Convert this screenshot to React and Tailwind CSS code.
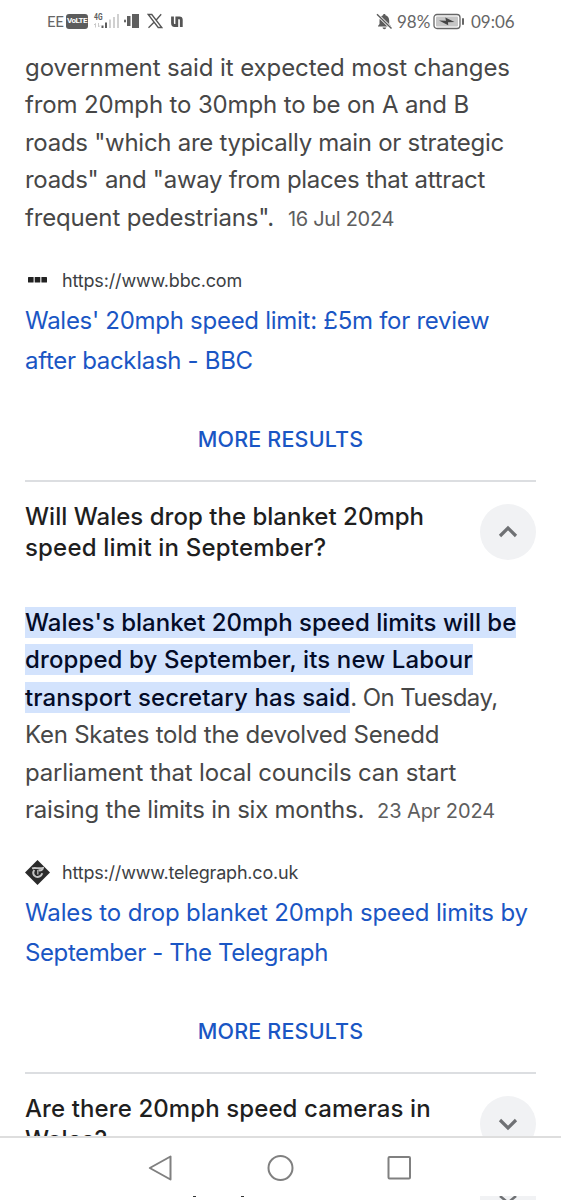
import { ChevronDown, ChevronUp } from "lucide-react";

function Line({ children, className = "" }) {
  return <span className={`block w-max whitespace-pre ${className}`}>{children}</span>;
}

function StatusBar() {
  return (
    <header className="flex h-[42px] shrink-0 items-center pl-[47px] pr-[47px] font-['Lato',sans-serif] text-[17px] leading-none text-[#666]">
      <span className="w-[19px] text-[15px] tracking-[-0.5px]">EE</span>
      <span className="flex h-[15px] w-[22px] shrink-0 items-center justify-center rounded-[3px] bg-[#5c5c5c] font-['Roboto',sans-serif] text-[8px] font-bold tracking-[-0.5px] text-white">
        VoLTE
      </span>
      <svg className="ml-[5px] shrink-0" width="27" height="18" viewBox="0 0 27 18">
        <text x="1" y="7.500" fontSize="8.500" fontWeight="700" fontFamily="Roboto" textLength="8.500" lengthAdjust="spacingAndGlyphs" fill="#5c5c5c">4G</text>
        <path d="M2.500 15.500v-4M1 13l1.500-1.500M5.500 11v4M7 13.500l-1.500 1.500" stroke="#c9c9c9" fill="none" />
        <path d="M9.500 13.500v2.500M13 10.500v5.500" stroke="#5c5c5c" strokeWidth="2" />
        <path d="M17 7.500v8.500M21 5v11M25 2v14" stroke="#d0d0d0" strokeWidth="2" />
      </svg>
      <svg className="ml-[4px] shrink-0" width="16" height="16" viewBox="0 0 16 16" fill="#5f5f5f">
        <rect x="0" y="6.500" width="2" height="3" rx="1" />
        <rect x="3" y="3" width="3.500" height="10" />
        <rect x="8" y="1" width="7" height="14" />
      </svg>
      <svg className="ml-[7px] shrink-0" width="16" height="16" viewBox="0 0 16 16" fill="none" stroke="#555" strokeWidth="1.300">
        <path d="M1.200 1.500h3.600l10 13h-3.600zM14.200 1.200 9 7.200M7 9.200 1.500 14.800" />
      </svg>
      <svg className="ml-[8px] shrink-0" width="12" height="13" viewBox="0 0 12 13" fill="none" stroke="#555" strokeWidth="2.800">
        <path d="M1.500 1.500v6.500q0 2.500 2 2.500h2.300V1.500M5.500 2.800h2.900q1.900 0 1.900 2v7.200" />
      </svg>
      <span className="grow" />
      <svg className="shrink-0" width="17" height="17" viewBox="0 0 17 17" fill="#5c5c5c">
        <path d="M8.300 1c.8 0 1.200.5 1.200 1.200 2.500.8 3.700 2.600 3.700 5.200v3.600l1.800 2v.6H2v-.6l1.500-2V7.400c0-2.600 1.300-4.400 3.600-5.200C7.100 1.500 7.500 1 8.300 1zM6.500 14.500h3.800c-.3 1.200-1 1.700-1.900 1.700s-1.600-.5-1.900-1.700z" />
        <path d="M1 1.200 15.500 15.500" stroke="#fff" strokeWidth="3" />
        <path d="M1 1.200 15.500 15.500" stroke="#5c5c5c" strokeWidth="1.400" />
      </svg>
      <span className="ml-[4px] w-[36px]">98%</span>
      <svg className="shrink-0" width="32" height="17" viewBox="0 0 32 17">
        <rect x="1" y="1.500" width="26" height="14" rx="3" fill="#fff" stroke="#666" strokeWidth="1.300" />
        <rect x="3" y="3.500" width="22" height="10" rx="1" fill="#c6c6c6" />
        <path d="m6 7.500 7 .3-.7-3.300L21.500 9l-6.500.2.200 3z" fill="#444" />
        <rect x="29" y="5" width="2" height="7" rx="1" fill="#666" />
      </svg>
      <span className="ml-[6px] w-[43px]">09:06</span>
    </header>
  );
}

function Source({ icon, children }) {
  return (
    <div className="flex h-6 items-center text-[18px] text-[#3c4043]">
      <span className="flex w-[37px] shrink-0">{icon}</span>
      {children}
    </div>
  );
}

function MoreResults() {
  return (
    <div className="flex h-10 items-center justify-center text-[21.500px] font-medium tracking-[0.18px] text-[#1a56c4]">
      <span>MORE RESULTS</span>
    </div>
  );
}

function Toggle({ open }) {
  const Icon = open ? ChevronUp : ChevronDown;
  return (
    <span className="mt-[3px] flex size-14 shrink-0 items-center justify-center rounded-full bg-[#f1f2f4] text-[#6f7174]">
      <Icon size={32} strokeWidth={2.4} strokeLinecap="butt" strokeLinejoin="miter" />
    </span>
  );
}

function BbcIcon() {
  return (
    <svg className="ml-[3px]" width="20" height="8" viewBox="0 0 20 8" fill="#222">
      <rect x="0" y="1" width="5.600" height="5.600" rx=".5" />
      <rect x="6.700" y="1" width="5.600" height="5.600" rx=".5" />
      <rect x="13.400" y="1" width="5.600" height="5.600" rx=".5" />
    </svg>
  );
}

function TelegraphIcon() {
  return (
    <svg width="25" height="25" viewBox="0 0 25 25">
      <path d="M12.500 0 25 12.500 12.500 25 0 12.500z" fill="#2b2b2b" />
      <path d="M7 8.300c3.500-1.200 6 .8 11-.3-.3 2.300-2.300 2.800-4.500 2.400" fill="none" stroke="#c4c4c4" strokeWidth="1.900" />
      <path d="M9.300 10c-1.800 2.300-1.300 5.600 1.500 6.600 2.800.9 5.600-.5 6.500-3.300" fill="none" stroke="#c4c4c4" strokeWidth="2" />
      <path d="M12.800 10v4.500" stroke="#a8a8a8" strokeWidth="1.500" />
    </svg>
  );
}

export default function App() {
  return (
    <div className="flex h-[1200px] w-[561px] flex-col overflow-hidden bg-white font-['Inter',sans-serif]">
      <StatusBar />
      <main className="flex h-[1094px] shrink-0 flex-col overflow-hidden px-[25px] pt-[6.500px]">
        <p className="text-[24px] leading-[37.500px] text-[#474747]">
          <Line className="tracking-[-0.09px]">government said it expected most changes</Line>
          <Line className="tracking-[-0.14px]">from 20mph to 30mph to be on A and B</Line>
          <Line className="tracking-[-0.28px]">roads "which are typically main or strategic</Line>
          <Line className="tracking-[-0.3px]">roads" and "away from places that attract</Line>
          <Line className="tracking-[-0.17px]">
            frequent pedestrians".<span className="ml-[14px] text-[20px] leading-none tracking-[-0.31px] text-[#5e5e5e]">16 Jul 2024</span>
          </Line>
        </p>
        <div className="mt-[32px]">
          <Source icon={<BbcIcon />}>
            <Line className="tracking-[-0.16px]">https://www.bbc.com</Line>
          </Source>
        </div>
        <a className="mt-[9px] text-[24px] leading-10 text-[#1a56c4]">
          <Line className="tracking-[-0.28px]">Wales' 20mph speed limit: £5m for review</Line>
          <Line className="tracking-[-0.3px]">after backlash - BBC</Line>
        </a>
        <div className="mt-[38.500px]">
          <MoreResults />
        </div>
        <section className="mt-[20.500px] border-t-2 border-[#dcdee1] pt-[19px]">
          <div className="flex justify-between">
            <h2 className="text-[24px] font-medium leading-[31px] text-[#1f1f1f]">
              <Line className="tracking-[0.02px]">Will Wales drop the blanket 20mph</Line>
              <Line className="tracking-[0.18px]">speed limit in September?</Line>
            </h2>
            <Toggle open />
          </div>
          <p className="mt-[40.500px] text-[24px] leading-[37.500px] text-[#474747]">
            <Line>
              <mark className="bg-[#d3e3fd] py-px font-medium text-[#040c28]">Wales's blanket 20mph speed limits will be</mark>
            </Line>
            <Line>
              <mark className="bg-[#d3e3fd] py-px font-medium tracking-[0.11px] text-[#040c28]">dropped by September, its new Labour</mark>
            </Line>
            <Line className="tracking-[-0.55px]">
              <mark className="bg-[#d3e3fd] py-px font-medium tracking-[0.1px] text-[#040c28]">transport secretary has said</mark>. On Tuesday,
            </Line>
            <Line className="tracking-[-0.23px]">Ken Skates told the devolved Senedd</Line>
            <Line className="tracking-[-0.17px]">parliament that local councils can start</Line>
            <Line className="tracking-[-0.24px]">
              raising the limits in six months.<span className="ml-[13px] text-[20px] leading-none tracking-[-0.1px] text-[#5e5e5e]">23 Apr 2024</span>
            </Line>
          </p>
          <div className="mt-[31.500px]">
            <Source icon={<TelegraphIcon />}>
              <Line className="tracking-[-0.19px]">https://www.telegraph.co.uk</Line>
            </Source>
          </div>
          <a className="mt-[8.500px] block text-[24px] leading-10 text-[#1a56c4]">
            <Line className="tracking-[-0.14px]">Wales to drop blanket 20mph speed limits by</Line>
            <Line className="tracking-[-0.4px]">September - The Telegraph</Line>
          </a>
          <div className="mt-[39px]">
            <MoreResults />
          </div>
        </section>
        <section className="mt-[20.500px] flex justify-between border-t-2 border-[#dcdee1] pt-[18.500px]">
          <h2 className="text-[24px] font-medium leading-[31px] text-[#1f1f1f]">
            <Line className="tracking-[0.1px]">Are there 20mph speed cameras in</Line>
            <Line>Wales?</Line>
          </h2>
          <Toggle />
        </section>
      </main>
      <nav className="flex h-[60px] shrink-0 items-center border-t-2 border-[#dedede] bg-white pl-[148px] pt-[2px]">
        <svg width="264" height="28" viewBox="0 0 264 28" fill="none" stroke="#808080" strokeWidth="2">
          <path d="M22.500 2.500v23L1.800 14z" strokeLinejoin="round" />
          <circle cx="132.500" cy="14" r="12" />
          <rect x="240.500" y="3" width="21.500" height="21.500" rx="1" />
        </svg>
      </nav>
      <div className="flex h-1 shrink-0 overflow-hidden">
        <span className="ml-[193px] h-px w-[3px] bg-[#333]" />
        <span className="ml-[45px] h-px w-[3px] bg-[#333]" />
        <span className="ml-[236px] flex h-1 w-14 justify-center bg-[#f1f2f4]">
          <svg width="20" height="4" viewBox="0 0 20 4" fill="none" stroke="#6f7174" strokeWidth="2.500">
            <path d="m2 0 6 5M18 0l-6 5" />
          </svg>
        </span>
      </div>
    </div>
  );
}
